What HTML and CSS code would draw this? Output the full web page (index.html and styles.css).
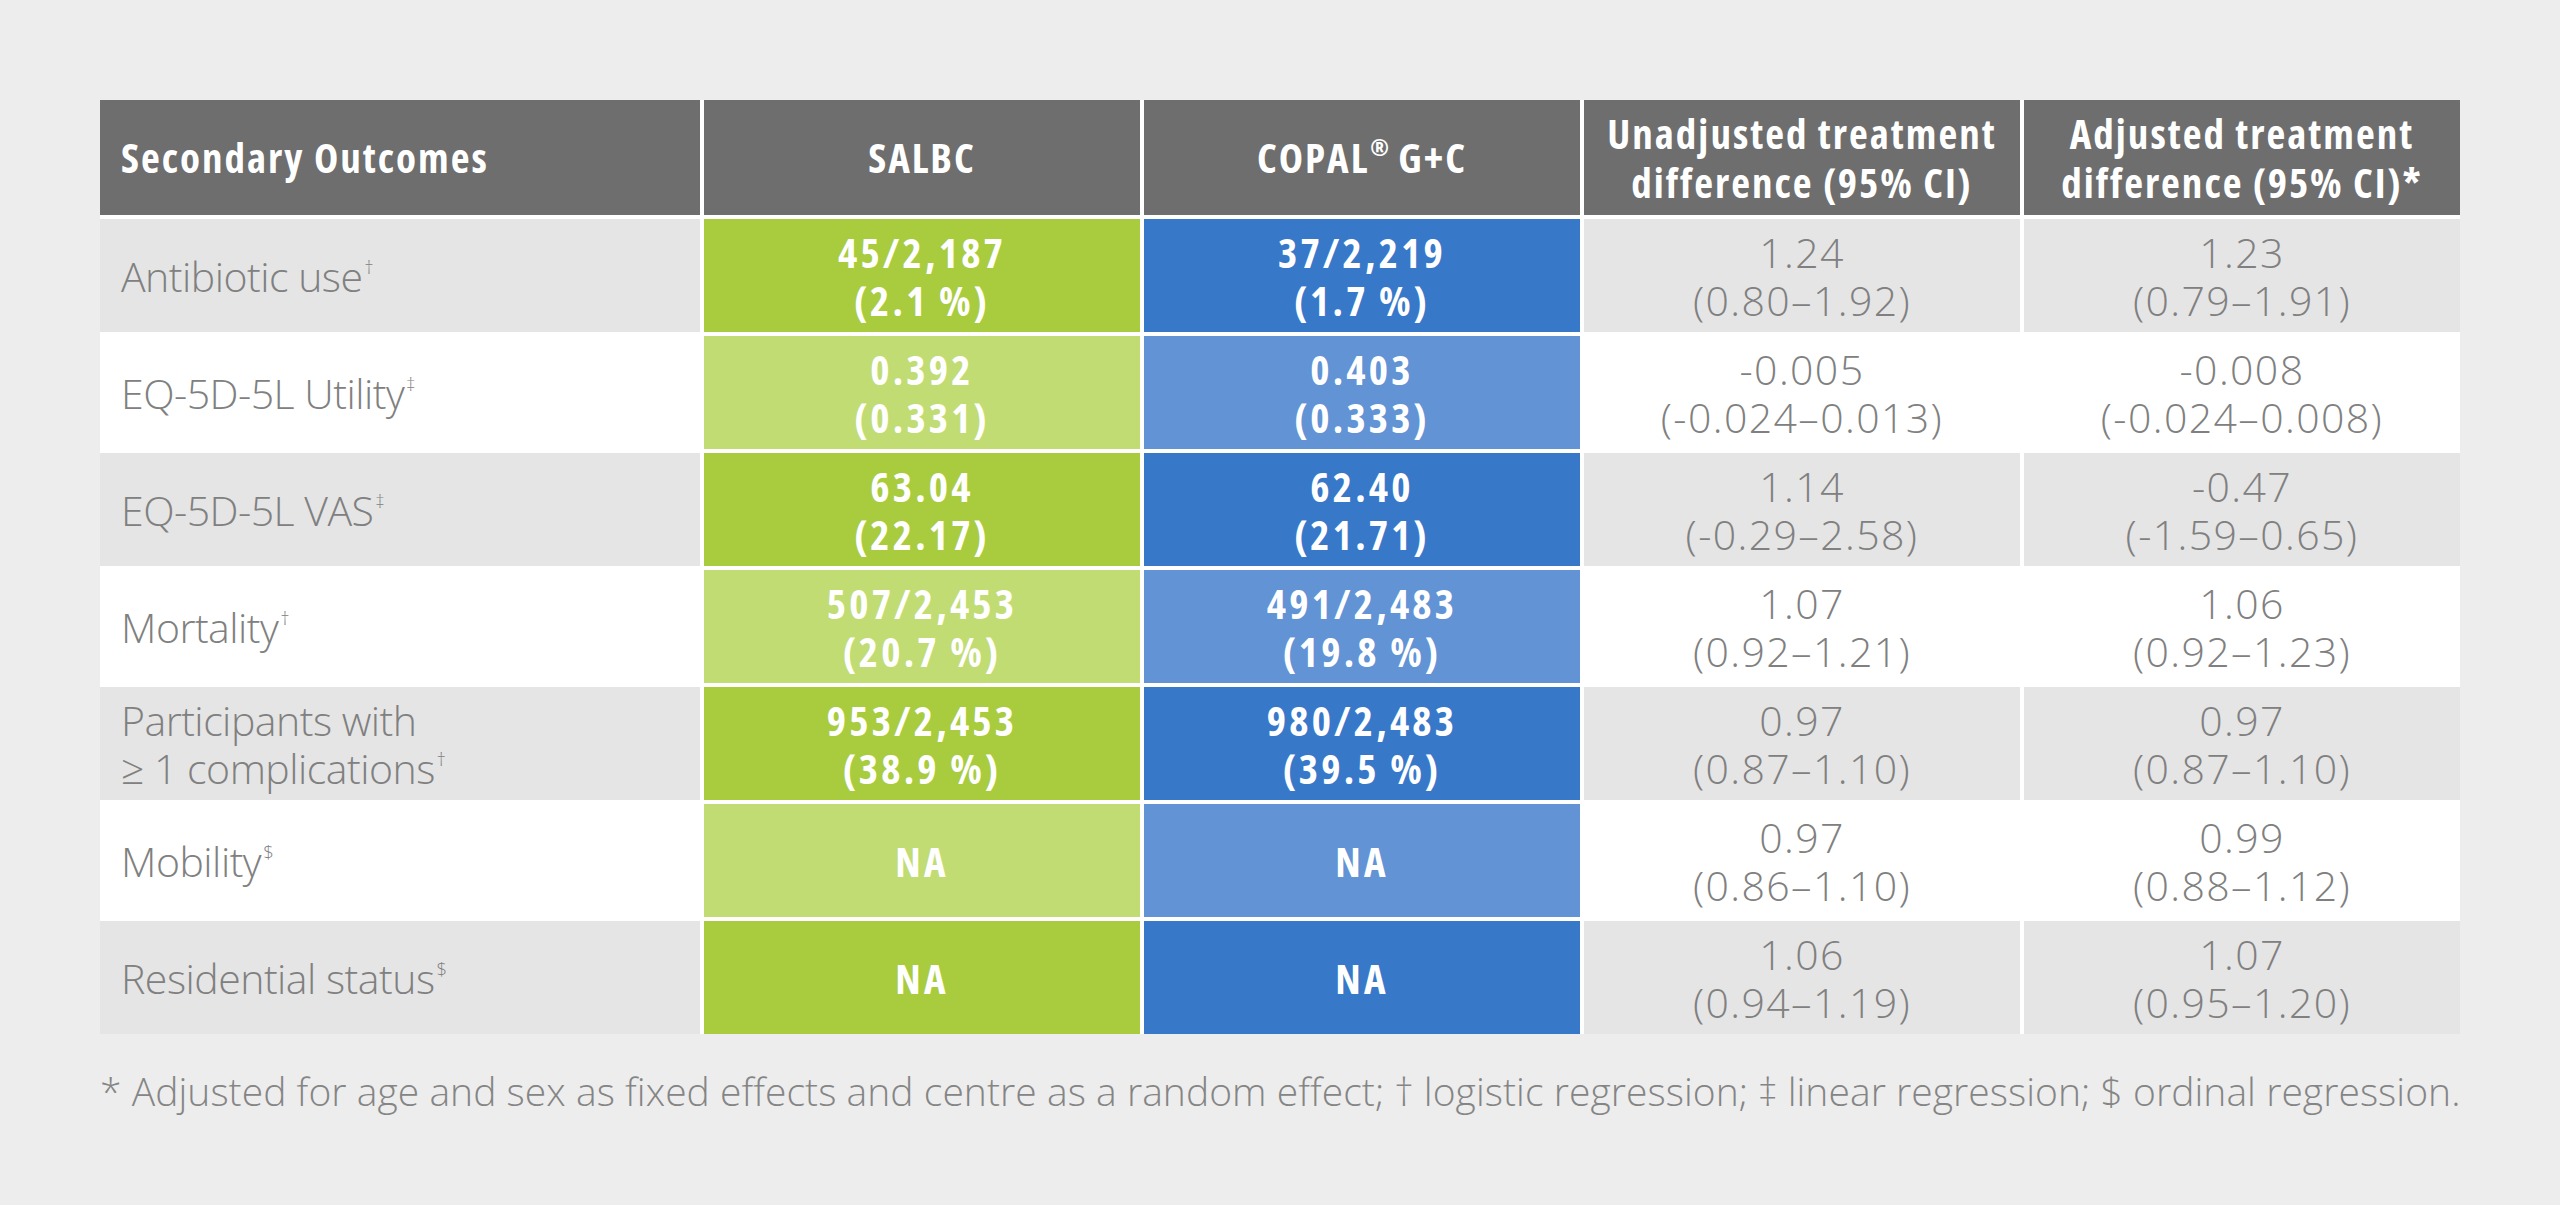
FILE: index.html
```html
<!DOCTYPE html>
<html lang="en">
<head>
<meta charset="utf-8">
<title>Secondary Outcomes</title>
<link rel="stylesheet" href="styles.css">
</head>
<body>
<main class="page">
  <div class="outcomes">
    <div class="cell head label"><span>Secondary Outcomes</span></div>
    <div class="cell head"><span>SALBC</span></div>
    <div class="cell head"><span>COPAL<sup class="reg">®</sup> G+C</span></div>
    <div class="cell head"><span>Unadjusted treatment<br>difference (95% CI)</span></div>
    <div class="cell head"><span>Adjusted treatment<br>difference (95% CI)*</span></div>

    <div class="cell label shade"><span>Antibiotic use<sup>†</sup></span></div>
    <div class="cell green"><span>45/2,187<br>(2.1 %)</span></div>
    <div class="cell blue"><span>37/2,219<br>(1.7 %)</span></div>
    <div class="cell shade"><span>1.24<br>(0.80–1.92)</span></div>
    <div class="cell shade"><span>1.23<br>(0.79–1.91)</span></div>

    <div class="cell label"><span>EQ-5D-5L Utility<sup>‡</sup></span></div>
    <div class="cell green-light"><span>0.392<br>(0.331)</span></div>
    <div class="cell blue-light"><span>0.403<br>(0.333)</span></div>
    <div class="cell"><span>-0.005<br>(-0.024–0.013)</span></div>
    <div class="cell"><span>-0.008<br>(-0.024–0.008)</span></div>

    <div class="cell label shade"><span>EQ-5D-5L VAS<sup>‡</sup></span></div>
    <div class="cell green"><span>63.04<br>(22.17)</span></div>
    <div class="cell blue"><span>62.40<br>(21.71)</span></div>
    <div class="cell shade"><span>1.14<br>(-0.29–2.58)</span></div>
    <div class="cell shade"><span>-0.47<br>(-1.59–0.65)</span></div>

    <div class="cell label"><span>Mortality<sup>†</sup></span></div>
    <div class="cell green-light"><span>507/2,453<br>(20.7 %)</span></div>
    <div class="cell blue-light"><span>491/2,483<br>(19.8 %)</span></div>
    <div class="cell"><span>1.07<br>(0.92–1.21)</span></div>
    <div class="cell"><span>1.06<br>(0.92–1.23)</span></div>

    <div class="cell label shade"><span>Participants with<br>≥ 1 complications<sup>†</sup></span></div>
    <div class="cell green"><span>953/2,453<br>(38.9 %)</span></div>
    <div class="cell blue"><span>980/2,483<br>(39.5 %)</span></div>
    <div class="cell shade"><span>0.97<br>(0.87–1.10)</span></div>
    <div class="cell shade"><span>0.97<br>(0.87–1.10)</span></div>

    <div class="cell label"><span>Mobility<sup>$</sup></span></div>
    <div class="cell green-light"><span>NA</span></div>
    <div class="cell blue-light"><span>NA</span></div>
    <div class="cell"><span>0.97<br>(0.86–1.10)</span></div>
    <div class="cell"><span>0.99<br>(0.88–1.12)</span></div>

    <div class="cell label shade"><span>Residential status<sup>$</sup></span></div>
    <div class="cell green"><span>NA</span></div>
    <div class="cell blue"><span>NA</span></div>
    <div class="cell shade"><span>1.06<br>(0.94–1.19)</span></div>
    <div class="cell shade"><span>1.07<br>(0.95–1.20)</span></div>
  </div>
  <p class="footnote">* Adjusted for age and sex as fixed effects and centre as a random effect; † logistic regression; ‡ linear regression; $ ordinal regression.</p>
</main>
</body>
</html>
```

FILE: styles.css
```css
html, body {
  margin: 0;
  padding: 0;
}

body {
  background: #ededed;
  font-family: "Open Sans", "DejaVu Sans Condensed", sans-serif;
  font-stretch: 92%;
  color: #808080;
}

.page {
  padding: 100px 100px 0;
}

.outcomes {
  display: grid;
  grid-template-columns: 600px repeat(4, 1fr);
  grid-template-rows: 115px repeat(7, 113px);
  gap: 4px;
  background: #ffffff;
}

.cell {
  display: flex;
  align-items: center;
  justify-content: center;
  text-align: center;
  font-size: 41px;
  line-height: 48px;
  font-weight: 300;
  letter-spacing: 1.4px;
  background: #ffffff;
  color: #808080;
}

.cell.label {
  justify-content: flex-start;
  text-align: left;
  padding-left: 21px;
  letter-spacing: -0.5px;
}

.cell.shade {
  background: #e5e5e5;
}

.cell.head {
  background: #6e6e6e;
  color: #ffffff;
  font-weight: 700;
  font-stretch: 75%;
  letter-spacing: 2px;
  line-height: 49px;
}

.cell.green,
.cell.green-light,
.cell.blue,
.cell.blue-light {
  color: #ffffff;
  font-weight: 700;
  font-stretch: 75%;
  letter-spacing: 3.2px;
}

.cell.green { background: #a9cc3f; }
.cell.green-light { background: #c2dc74; }
.cell.blue { background: #3878c9; }
.cell.blue-light { background: #6193d5; }

sup {
  font-size: 0.45em;
  line-height: 0;
  letter-spacing: 0;
  vertical-align: 0.95em;
  margin-left: 2px;
}

sup.reg {
  font-size: 0.55em;
  vertical-align: 0.75em;
  margin-left: 1px;
}

.footnote {
  margin: 33px 0 0;
  font-size: 39px;
  line-height: 48px;
  font-weight: 300;
  letter-spacing: 0.05px;
  color: #858585;
  white-space: nowrap;
}
```
